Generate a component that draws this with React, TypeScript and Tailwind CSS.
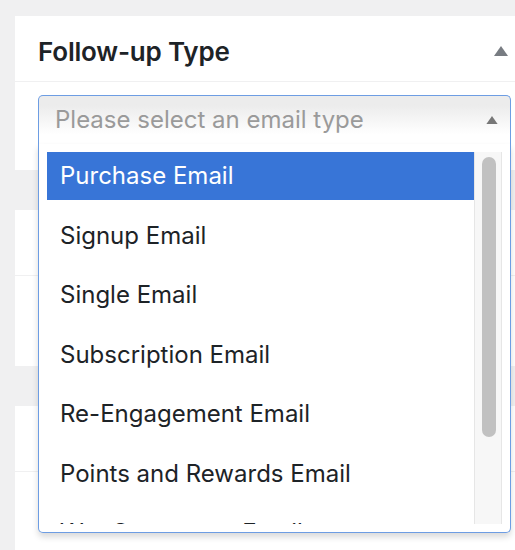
const items = [
  'Purchase Email',
  'Signup Email',
  'Single Email',
  'Subscription Email',
  'Re-Engagement Email',
  'Points and Rewards Email',
  'WooCommerce Email',
];

function Caret({ className }: { className: string }) {
  return (
    <svg viewBox="0 0 14 10" className={className} fill="currentColor">
      <path d="M7 0 L14 10 L0 10 Z" />
    </svg>
  );
}

function EmptyPanel() {
  return (
    <div className="bg-white h-[156px] mt-[40px]">
      <div className="h-[66px] border-b border-[#f0f0f1]" />
    </div>
  );
}

export default function App() {
  const selected = 0;

  return (
    <div className="min-h-[550px] h-[550px] overflow-hidden bg-[#f0f0f1] pl-[15px] pt-[16px] font-['Inter',sans-serif]">
      <div className="bg-white h-[154px]">
        <div className="h-[66px] border-b border-[#f0f0f1] flex items-center justify-between pl-[23px] pr-[7px] pt-[5px]">
          <h2 className="text-[26px] font-semibold text-[#1d2327] tracking-[-0.2px]">Follow-up Type</h2>
          <Caret className="w-[14px] h-[10px] text-[#787c82]" />
        </div>

        <div className="pl-[23px] pt-[13px]">
          <div className="relative w-[473px] z-10">
            <div className="h-[49px] border-t border-x border-[#6d9de3] rounded-t-[5px] bg-linear-to-b from-[#ececec] from-20% to-white to-80% flex items-center justify-between pl-[16px] pr-[12px]">
              <span className="text-[24px] text-[#9a9a9a]">Please select an email type</span>
              <Caret className="w-[12px] h-[8px] text-[#777]" />
            </div>

            <div className="absolute left-0 top-full w-[473px] bg-white border-b border-x border-[#6d9de3] rounded-b-[5px] shadow-[0_4px_6px_rgba(0,0,0,0.15)] px-[8px] pt-[8px] pb-[8px] flex">
              <ul className="flex-1 h-[372px] overflow-hidden flex flex-col gap-[11.5px]">
                {items.map((item, i) => (
                  <li
                    key={item}
                    className={`shrink-0 h-[48px] leading-[48px] pl-[13px] text-[24px] ${i === selected ? 'bg-[#3875d7] text-white' : 'text-[#1d2327]'}`}
                  >
                    {item}
                  </li>
                ))}
              </ul>
              <div className="w-[28px] h-[372px] bg-[#f7f7f7] border-x border-[#e6e6e6] pt-[5px] pl-[7px]">
                <div className="w-[14px] h-[280px] rounded-full bg-[#c1c1c1]" />
              </div>
            </div>
          </div>
        </div>
      </div>

      <EmptyPanel />
      <EmptyPanel />
    </div>
  );
}
